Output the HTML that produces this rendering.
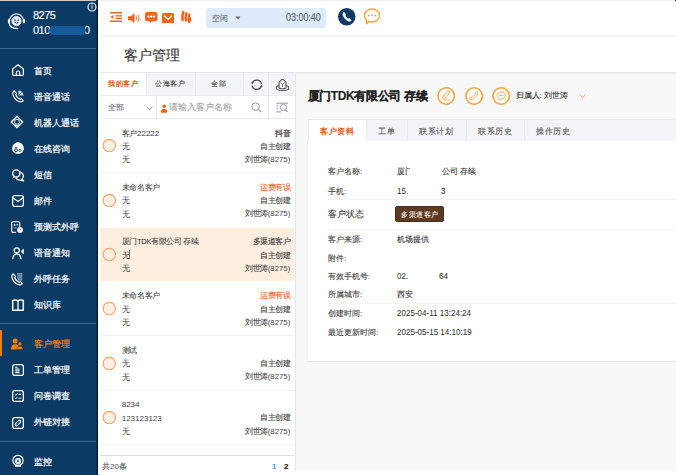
<!DOCTYPE html>
<html><head><meta charset="utf-8">
<style>
*{margin:0;padding:0;box-sizing:border-box}
html,body{width:676px;height:475px;overflow:hidden;background:#fff;font-family:"Liberation Sans",sans-serif;color:#333}
.a{position:absolute;white-space:nowrap}
#sb{position:absolute;left:0;top:0;width:98px;height:475px;background:#0b3a64}
#sb .edge{position:absolute;left:96px;top:0;width:2px;height:475px;background:linear-gradient(90deg,#08305a 0,#08305a 50%,#041831 50%)}
.sep{position:absolute;left:0;width:96px;height:1px;background:#3a6791}
.mi{position:absolute;left:33.5px;font-size:9.2px;line-height:10px;color:#fff}
.ic{position:absolute;left:11px;width:13px;height:13px}
.t9{font-size:7.2px;line-height:8px}
.line{position:absolute;background:#e9ebef}
body div.a{-webkit-text-stroke-width:0.12px}
.mi{-webkit-text-stroke-width:0.22px}
</style></head><body>

<!-- top line -->
<div class="a" style="left:0;top:0;width:676px;height:1px;background:#eceef0"></div>

<!-- SIDEBAR -->
<div id="sb">
  <div class="a" style="left:0;top:0;width:98px;height:1px;background:#c9ced6"></div>
  <div class="edge"></div>
  <!-- avatar -->
  <svg class="a" style="left:4px;top:10px" width="26" height="22" viewBox="0 0 26 22">
    <path d="M5.6 10.8 A6.9 6.9 0 0 1 19.4 10.8" fill="none" stroke="#d4e0ec" stroke-width="1.3"/>
    <circle cx="12.5" cy="11.1" r="4.6" fill="#e4edf6" stroke="#fff" stroke-width="0.9"/>
    <circle cx="10.9" cy="10.1" r="0.8" fill="#0b3a64"/><circle cx="14.1" cy="10.1" r="0.8" fill="#0b3a64"/>
    <path d="M10.5 12.2 Q12.5 14.3 14.5 12.2" fill="none" stroke="#0b3a64" stroke-width="0.9"/>
    <rect x="3.9" y="9" width="2.2" height="4.4" rx="1.1" fill="#fff"/>
    <rect x="18.9" y="9" width="2.2" height="4.4" rx="1.1" fill="#fff"/>
    <path d="M5.2 13.2 C5.6 16.6 8.6 18.6 13.6 18.6" fill="none" stroke="#dde7f1" stroke-width="1.5" stroke-linecap="round"/>
  </svg>
  <div class="a" style="left:33px;top:9px;font-size:11px;line-height:12px;color:#fff;letter-spacing:-0.5px;-webkit-text-stroke-width:0.15px">8275</div>
  <div class="a" style="left:33px;top:24px;font-size:11px;line-height:12px;color:#fff;letter-spacing:-0.5px;-webkit-text-stroke-width:0.15px">010</div>
  <div class="a" style="left:84px;top:24px;width:8px;height:12px;overflow:hidden;font-size:11px;line-height:12px;color:#fff"><span style="margin-left:0px">0</span></div>
  <div class="a" style="left:49px;top:25.8px;width:37px;height:9.5px;border-radius:5px/4.7px;background:#165a9c"></div>
  <svg class="a" style="left:87px;top:2px" width="10" height="10" viewBox="0 0 10 10">
    <circle cx="5" cy="5" r="4" fill="none" stroke="#fff" stroke-width="1.1"/>
    <rect x="4.5" y="3.8" width="1" height="3" fill="#fff"/><rect x="4.5" y="2.4" width="1" height="0.9" fill="#fff"/>
  </svg>
  <div class="sep" style="top:48px"></div>

  <!-- menu -->
  <div class="mi" style="top:65.5px">首页</div>
  <div class="mi" style="top:91.6px">语音通话</div>
  <div class="mi" style="top:117.7px">机器人通话</div>
  <div class="mi" style="top:143.8px">在线咨询</div>
  <div class="mi" style="top:169.9px">短信</div>
  <div class="mi" style="top:196px">邮件</div>
  <div class="mi" style="top:222.1px">预测式外呼</div>
  <div class="mi" style="top:248.2px">语音通知</div>
  <div class="mi" style="top:274.3px">外呼任务</div>
  <div class="mi" style="top:300.4px">知识库</div>
  <div class="sep" style="top:323px"></div>
  <div class="a" style="left:0;top:330px;width:2px;height:26px;background:#f27f0c"></div>
  <div class="mi" style="top:339px;color:#f27f0c">客户管理</div>
  <div class="mi" style="top:365.1px">工单管理</div>
  <div class="mi" style="top:391.2px">问卷调查</div>
  <div class="mi" style="top:417.3px">外链对接</div>
  <div class="sep" style="top:440.5px"></div>
  <div class="mi" style="top:456.5px">监控</div>

  <!-- icons -->
  <svg class="a" style="left:10.8px;top:63.4px" width="14" height="14" viewBox="0 0 14 14"><path d="M7 1.8 L12.35 5.9 V11.4 Q12.35 12.35 11.4 12.35 H2.6 Q1.65 12.35 1.65 11.4 V5.9 Z" fill="none" stroke="#fff" stroke-width="1.3" stroke-linejoin="round"/><path d="M5.3 12.3 V9.7 A1.7 1.7 0 0 1 8.7 9.7 V12.3" fill="none" stroke="#fff" stroke-width="1.1"/></svg>
  <svg class="a" style="left:10.8px;top:89.4px" width="14" height="14" viewBox="0 0 14 14"><path d="M3.3 1.9 C1.6 2.6 1.3 4.8 2.7 7.6 C4.1 10.3 6.7 12.5 9.5 12.8 C10.7 12.9 11.7 12.4 12.3 11.6 L10.4 9.7 L9.2 10.3 C7.8 9.8 5.3 7.3 4.7 5.7 L5.5 4.5 Z" fill="none" stroke="#fff" stroke-width="1.2" stroke-linejoin="round"/><path d="M7.4 6.6 L7.4 1.6 A5 5 0 0 1 12.6 6.6 Z" fill="#fff" opacity="0.8"/><path d="M7.4 6.6 L11 3" stroke="#0b3a64" stroke-width="0.6"/></svg>
  <svg class="a" style="left:10.3px;top:115.4px" width="14" height="14" viewBox="0 0 14 14"><path d="M7 1.3 L12.7 7 L7 12.7 L1.3 7 Z" fill="none" stroke="#fff" stroke-width="1.3" stroke-linejoin="round"/><circle cx="7" cy="6.8" r="2.5" fill="none" stroke="#fff" stroke-width="0.9"/><path d="M5 9.5 L7 11 L9 9.5" fill="none" stroke="#fff" stroke-width="0.9"/></svg>
  <svg class="a" style="left:10.6px;top:141.4px" width="14" height="14" viewBox="0 0 14 14"><path d="M7 1.2 C9.8 1.2 12.8 3.6 12.8 7.4 C12.8 10.6 10.4 12.8 7 12.8 C3.6 12.8 1.2 10.6 1.2 7.4 C1.2 3.6 4.2 1.2 7 1.2 Z" fill="#fff"/><circle cx="5" cy="9.3" r="1.5" fill="none" stroke="#0b3a64" stroke-width="1"/><circle cx="8.9" cy="9.4" r="1.1" fill="none" stroke="#0b3a64" stroke-width="0.8"/><path d="M3.4 7.2 Q4.6 5.8 6.4 7" fill="none" stroke="#0b3a64" stroke-width="0.8"/></svg>
  <svg class="a" style="left:10.8px;top:167.5px" width="14" height="14" viewBox="0 0 14 14"><circle cx="5.3" cy="5.4" r="3.6" fill="none" stroke="#fff" stroke-width="1.3"/><path d="M2.6 8 L1.6 10.4 L4 9.2" fill="#fff"/><path d="M8.7 3.8 C10.9 4.3 12.3 6.1 12.3 8.2 C12.3 9.5 11.7 10.6 10.8 11.3 L12.6 12.8 L8.8 12.2 C7 12.2 5.5 11.2 4.8 9.8" fill="none" stroke="#fff" stroke-width="1.3" stroke-linejoin="round"/></svg>
  <svg class="a" style="left:10.6px;top:193.9px" width="14" height="14" viewBox="0 0 14 14"><rect x="1.65" y="1.65" width="10.7" height="10.7" rx="2" fill="none" stroke="#fff" stroke-width="1.3"/><path d="M1.9 3.7 L7 7.6 L12.1 3.7" fill="none" stroke="#fff" stroke-width="1.2"/></svg>
  <svg class="a" style="left:10.1px;top:219.9px" width="14" height="14" viewBox="0 0 14 14"><path d="M9.8 7 V3.6 Q9.8 1.65 7.8 1.65 H3.6 Q1.65 1.65 1.65 3.6 V10.4 Q1.65 12.35 3.6 12.35 H6" fill="none" stroke="#fff" stroke-width="1.2" opacity="0.9"/><circle cx="4.6" cy="4.8" r="0.9" fill="#fff"/><path d="M6.4 4.8 H8.2" stroke="#fff" stroke-width="1"/><path d="M3.8 8 H6.5" stroke="#fff" stroke-width="0.8" opacity="0.7"/><circle cx="10" cy="10.1" r="3" fill="#efe6ea"/><circle cx="10.6" cy="9.6" r="0.6" fill="#b8b0b8"/></svg>
  <svg class="a" style="left:10.6px;top:246.1px" width="14" height="14" viewBox="0 0 14 14"><circle cx="5.8" cy="4.4" r="2.6" fill="none" stroke="#fff" stroke-width="1.3"/><path d="M1.7 12.6 C2.2 9.4 3.8 7.8 5.8 7.8 C7.8 7.8 9.4 9.4 9.9 12.6" fill="none" stroke="#fff" stroke-width="1.3" stroke-linecap="round"/><path d="M10.3 4.6 L12.8 2.6 V8.6 L10.3 6.6 Z" fill="#fff" opacity="0.9"/></svg>
  <svg class="a" style="left:10.3px;top:272.3px" width="14" height="14" viewBox="0 0 14 14"><path d="M3.3 1.9 C1.6 2.6 1.3 4.8 2.7 7.6 C4.1 10.3 6.7 12.5 9.5 12.8 C10.7 12.9 11.7 12.4 12.3 11.6 L10.4 9.7 L9.2 10.3 C7.8 9.8 5.3 7.3 4.7 5.7 L5.5 4.5 Z" fill="none" stroke="#fff" stroke-width="1.2" stroke-linejoin="round"/><path d="M7.2 1.9 H12.4 M7.2 3.9 H12.4 M7.2 5.9 H12.4 M8 7.9 H12.4" stroke="#fff" stroke-width="0.9" opacity="0.85"/></svg>
  <svg class="a" style="left:10.8px;top:298.1px" width="14" height="14" viewBox="0 0 14 14"><path d="M1.7 2.5 Q4.5 1.2 7 2.8 Q9.5 1.2 12.3 2.5 V12.2 H1.7 Z" fill="none" stroke="#fff" stroke-width="1.5" stroke-linejoin="round"/><path d="M7 2.9 V12" stroke="#fff" stroke-width="1.3"/></svg>
  <svg class="a" style="left:10.1px;top:337.1px" width="14" height="14" viewBox="0 0 14 14"><circle cx="5.1" cy="3.9" r="2.5" fill="#f27f0c"/><path d="M1 12.4 C1 8.7 2.6 7.3 5.1 7.3 C6.6 7.3 7.7 7.8 8.3 8.6 L7.3 12.4 Z" fill="#f27f0c"/><circle cx="9.9" cy="6.9" r="1.9" fill="#f27f0c" stroke="#0b3a64" stroke-width="0.5"/><path d="M6.9 12.6 C6.9 10.3 8.1 9.2 9.9 9.2 C11.7 9.2 12.9 10.3 12.9 12.6 Z" fill="#f27f0c" stroke="#0b3a64" stroke-width="0.5"/></svg>
  <svg class="a" style="left:10.6px;top:362.9px" width="14" height="14" viewBox="0 0 14 14"><rect x="1.65" y="1.65" width="10.7" height="10.7" rx="2.2" fill="none" stroke="#fff" stroke-width="1.3"/><path d="M4.2 4.4 H6.4 M4.2 6.2 H8.6 M4.2 7.9 H8.6 M4.2 9.6 H8.6" stroke="#fff" stroke-width="1.2" opacity="0.9"/></svg>
  <svg class="a" style="left:10.6px;top:389.3px" width="14" height="14" viewBox="0 0 14 14"><rect x="1.65" y="1.65" width="10.7" height="10.7" rx="2.2" fill="none" stroke="#fff" stroke-width="1.3"/><path d="M3.8 5.4 L4.8 6.2 L6.3 4.3 M3.8 9 L4.8 9.8 L6.3 7.9" fill="none" stroke="#fff" stroke-width="1"/><path d="M7.6 5.4 H10.2 M7.6 9.2 H10.2" stroke="#fff" stroke-width="1.1"/></svg>
  <svg class="a" style="left:10.6px;top:415.6px" width="14" height="14" viewBox="0 0 14 14"><rect x="1.65" y="1.65" width="10.7" height="10.7" rx="2.2" fill="none" stroke="#fff" stroke-width="1.3"/><rect x="3.6" y="5.6" width="6.8" height="2.8" rx="1.4" transform="rotate(-45 7 7)" fill="none" stroke="#fff" stroke-width="1"/><circle cx="6" cy="8" r="0.5" fill="#fff"/><circle cx="8" cy="6" r="0.5" fill="#fff"/></svg>
  <svg class="a" style="left:10.6px;top:453.6px" width="14" height="14" viewBox="0 0 14 14"><circle cx="7" cy="6.4" r="5.1" fill="none" stroke="#fff" stroke-width="1.2"/><circle cx="7" cy="7" r="3.1" fill="#fff" opacity="0.9"/><circle cx="7" cy="7" r="0.9" fill="#0b3a64"/><path d="M3.8 12.7 H10.2 L9.3 10.8 H4.7 Z" fill="#fff"/></svg>
</div>

<!-- HEADER -->
<div class="a" style="left:100px;top:35px;width:576px;height:1px;background:#f6f6f7"></div><div class="a" style="left:100px;top:36px;width:576px;height:1px;background:#f3f3f4"></div>
<svg class="a" style="left:110px;top:12px" width="12" height="10" viewBox="0 0 12 10"><rect x="0" y="0" width="12" height="1.5" fill="#f0641e"/><rect x="5.5" y="3.2" width="6.5" height="1.3" fill="#f0641e"/><rect x="5.5" y="5.7" width="6.5" height="1.3" fill="#f0641e"/><rect x="0" y="8.5" width="12" height="1.5" fill="#f0641e"/><path d="M0.3 5 L3.5 3 V7 Z" fill="#f0641e"/></svg>
<svg class="a" style="left:128px;top:12.5px" width="12" height="10.5" viewBox="0 0 12 10.5"><path d="M0 3.3 H2.8 L6.5 0.3 V10.2 L2.8 7.2 H0 Z" fill="#f0641e"/><path d="M8 3.2 C8.9 4.3 8.9 6.2 8 7.3 M9.8 1.8 C11.4 3.6 11.4 6.9 9.8 8.7" fill="none" stroke="#f0641e" stroke-width="1"/></svg>
<svg class="a" style="left:145px;top:12px" width="12.5" height="11" viewBox="0 0 12.5 11"><path d="M2.3 0 H10.2 A2.3 2.3 0 0 1 12.5 2.3 V6.9 A2.3 2.3 0 0 1 10.2 9.2 H7 L5.5 10.8 L4.2 9.2 H2.3 A2.3 2.3 0 0 1 0 6.9 V2.3 A2.3 2.3 0 0 1 2.3 0 Z" fill="#f0641e"/><circle cx="3.5" cy="4.6" r="1.15" fill="#fff"/><circle cx="6.25" cy="4.6" r="1.15" fill="#fff"/><circle cx="9" cy="4.6" r="1.15" fill="#fff"/></svg>
<svg class="a" style="left:162.3px;top:12.7px" width="12.2" height="10.5" viewBox="0 0 12.2 10.5"><rect x="0" y="0" width="12.2" height="10.5" rx="1.8" fill="#f0641e"/><path d="M2 2.5 L6.1 6.3 L10.2 2.5" fill="none" stroke="#fff" stroke-width="1.3"/></svg>
<svg class="a" style="left:180px;top:10px" width="13" height="14" viewBox="0 0 13 14"><path d="M3.2 2 C2.6 4 2 6.5 2.6 10" fill="none" stroke="#f0641e" stroke-width="2.6" stroke-linecap="round"/><path d="M6.2 3.2 C5.8 5 5.4 7.5 5.9 10.4" fill="none" stroke="#f0641e" stroke-width="2.4" stroke-linecap="round"/><path d="M9.1 4.6 C8.9 6.5 8.8 9 9.1 11.8" fill="none" stroke="#f0641e" stroke-width="2.6" stroke-linecap="round"/><ellipse cx="9.4" cy="9.4" rx="2" ry="2.6" fill="#f0641e"/></svg>

<div class="a" style="left:205.6px;top:7.6px;width:120.4px;height:20.5px;background:#ddebfa;border-radius:3px"></div>
<div class="a" style="left:212px;top:14px;font-size:8.4px;line-height:9px;color:#707070">空闲</div>
<svg class="a" style="left:235px;top:16px" width="6" height="4" viewBox="0 0 6 4"><path d="M0.5 0.5 H5.5 L3 3.5 Z" fill="#666"/></svg>
<div class="a" style="left:285.5px;top:13.2px;font-size:10.4px;line-height:10px;color:#505a66;-webkit-text-stroke-width:0.1px;transform:scaleX(0.86);transform-origin:0 0">03:00:40</div>

<svg class="a" style="left:338px;top:8.4px" width="17.5" height="17.5" viewBox="0 0 17.5 17.5"><circle cx="8.75" cy="8.75" r="8.75" fill="#0e3a68"/><path d="M6 4.3 C4.9 4.8 4.6 6.5 5.6 8.6 C6.9 11 9 12.8 11 13.2 C12.1 13.4 12.8 12.8 13.1 12.2 L11.3 10.6 L10.2 11 C9.1 10.4 7.6 8.9 7.2 7.8 L7.7 6.6 Z" fill="#fff" stroke="#fff" stroke-width="0.7" stroke-linejoin="round"/></svg>
<svg class="a" style="left:362.5px;top:8px" width="18" height="17" viewBox="0 0 18 17"><path d="M9 1 C13.2 1 16.5 3.8 16.5 7.5 C16.5 11.2 13.2 14 9 14 C8 14 7 13.8 6.2 13.5 L3.5 15.8 L3.8 12.5 C2.3 11.3 1.5 9.5 1.5 7.5 C1.5 3.8 4.8 1 9 1 Z" fill="none" stroke="#f7a035" stroke-width="1.3" stroke-linejoin="round"/><circle cx="5.8" cy="7.5" r="0.9" fill="#f7a035"/><circle cx="9" cy="7.5" r="0.9" fill="#f7a035"/><circle cx="12.2" cy="7.5" r="0.9" fill="#f7a035"/></svg>

<!-- TITLE -->
<div class="a" style="left:123.5px;top:48px;font-size:14px;line-height:14px;color:#333">客户管理</div>
<div class="a" style="left:100px;top:72px;width:576px;height:1px;background:#e5e6e8"></div><div class="a" style="left:100px;top:73px;width:576px;height:1px;background:#ededee"></div>

<!-- RIGHT GRAY -->
<div class="a" style="left:295px;top:74px;width:381px;height:397px;background:#f8f8f8"></div><div class="a" style="left:295px;top:471px;width:381px;height:1px;background:#fbfbfb"></div>
<div class="a" style="left:295px;top:73px;width:1px;height:398px;background:#e6e8ec"></div>


<!-- LEFT LIST -->
<div class="a" style="left:100px;top:73px;width:195px;height:22px;background:#f4f5f8"></div>
<div class="a" style="left:100px;top:73px;width:46.4px;height:22px;background:#fff"></div>
<div class="line" style="left:146.4px;top:73px;width:1px;height:22px"></div>
<div class="line" style="left:194.5px;top:73px;width:1px;height:22px"></div>
<div class="line" style="left:243px;top:73px;width:1px;height:22px"></div>
<div class="line" style="left:268px;top:73px;width:1px;height:45px"></div>
<div class="line" style="left:100px;top:95px;width:195px;height:1px"></div>
<div class="line" style="left:156px;top:95px;width:1px;height:23px"></div>
<div class="line" style="left:100px;top:118px;width:195px;height:1px"></div>
<div class="a t9" style="left:107.8px;top:80.3px;color:#ef5c18;-webkit-text-stroke-width:0.3px;font-size:7.6px;transform:scale(0.94);transform-origin:0 0">我的客户</div>
<div class="a t9" style="left:155px;top:80.3px;color:#444;font-size:7.6px;transform:scale(0.94);transform-origin:0 0">公海客户</div>
<div class="a t9" style="left:211px;top:80.3px;color:#444;font-size:7.6px;transform:scale(0.94);transform-origin:0 0">全部</div>
<svg class="a" style="left:249.5px;top:78px" width="14" height="14" viewBox="0 0 14 14"><path d="M2.3 5.3 A4.8 4.8 0 0 1 11.5 5.9" fill="none" stroke="#4a4a4a" stroke-width="1.3"/><path d="M11.3 8.3 A4.8 4.8 0 0 1 2.1 7.6" fill="none" stroke="#4a4a4a" stroke-width="1.3"/><path d="M1 4.6 L3.6 4.6 L2.3 6.6 Z" fill="#4a4a4a"/><path d="M12.8 9 L10.2 9 L11.5 7 Z" fill="#4a4a4a"/></svg>
<svg class="a" style="left:275px;top:78px" width="15" height="14" viewBox="0 0 15 14"><ellipse cx="7.5" cy="9.9" rx="6.4" ry="2.6" fill="none" stroke="#555" stroke-width="1.1"/><path d="M4 9.9 V5.4 Q4 4.2 5 3.2 L6.4 1.8 Q7.5 0.9 8.6 1.8 L10 3.2 Q11 4.2 11 5.4 V9.9 Q7.5 11.5 4 9.9 Z" fill="#fbfbfc" stroke="#555" stroke-width="1.1"/><path d="M5.4 4.6 L7.5 6.2 L9.6 4.6 M7.5 6.2 V9" fill="none" stroke="#666" stroke-width="0.9"/></svg>
<div class="a" style="left:108px;top:103.3px;font-size:8.4px;line-height:9px;color:#7a7a7a">全部</div>
<svg class="a" style="left:146px;top:106px" width="7" height="4.5" viewBox="0 0 7 4.5"><path d="M0.5 0.5 L3.5 3.8 L6.5 0.5" fill="none" stroke="#999" stroke-width="0.9"/></svg>
<svg class="a" style="left:160.6px;top:103.5px" width="6.5" height="9" viewBox="0 0 6.5 9"><circle cx="3.25" cy="2.2" r="1.8" fill="#f0641e"/><path d="M0 8.8 V7.2 C0 5.6 1.3 5 3.25 5 C5.2 5 6.5 5.6 6.5 7.2 V8.8 Z" fill="#f0641e"/></svg>
<div class="a" style="left:169px;top:102.8px;font-size:8.9px;line-height:9.5px;color:#a5a5a5">请输入客户名称</div>
<svg class="a" style="left:250.5px;top:102.2px" width="11" height="10.5" viewBox="0 0 11 10.5"><circle cx="4.6" cy="4.6" r="3.8" fill="none" stroke="#8f96a3" stroke-width="1"/><path d="M7.3 7.3 L10.3 10" stroke="#8f96a3" stroke-width="1.1"/></svg>
<svg class="a" style="left:276px;top:101.5px" width="13" height="11.5" viewBox="0 0 13 11.5"><path d="M0.3 1.2 H12 M0.3 4 H2.3 M0.3 6.9 H2.3 M0.3 9.9 H5" stroke="#8f96a3" stroke-width="1"/><circle cx="7.4" cy="5.5" r="3.1" fill="none" stroke="#8f96a3" stroke-width="1"/><path d="M9.6 7.8 L11.6 9.9" stroke="#8f96a3" stroke-width="1.1"/></svg>
<div class="a" style="left:294.8px;top:73px;width:1px;height:398px;background:#e4e6ea"></div>

<!-- ITEMS -->
<svg class="a" style="left:102px;top:138.3px" width="15" height="15" viewBox="0 0 15 15"><circle cx="7.3" cy="7.5" r="6.2" fill="#fdeee3" stroke="#f2a266" stroke-width="1.15"/></svg>
<div class="a" style="left:121.7px;top:129.5px;font-size:7.6px;line-height:8px;color:#3a3a3a;letter-spacing:-0.35px;-webkit-text-stroke-width:0.06px">客户<span style="font-size:8.0px;-webkit-text-stroke-width:0;letter-spacing:0">22222</span></div>
<div class="a" style="left:121.7px;top:143.1px;font-size:7.6px;line-height:8px;color:#444;letter-spacing:-0.35px;-webkit-text-stroke-width:0.03px">无</div>
<div class="a" style="left:121.7px;top:156.3px;font-size:7.6px;line-height:8px;color:#444;letter-spacing:0px;-webkit-text-stroke-width:0.03px">无</div>
<div class="a" style="right:385.9px;top:129.5px;font-size:7.6px;line-height:8px;color:#333;letter-spacing:-0.55px;-webkit-text-stroke-width:0.22px">抖音</div>
<div class="a" style="right:385.9px;top:142.9px;font-size:7.6px;line-height:8px;color:#444;letter-spacing:-0.55px;">自主创建</div>
<div class="a" style="right:385.7px;top:156.1px;font-size:7.6px;line-height:8px;color:#444;letter-spacing:-0.4px;">刘世涛<span style="font-size:7.8px;-webkit-text-stroke-width:0;letter-spacing:0">(8275)</span></div>
<div class="line" style="left:100px;top:172.3px;width:195px;height:1px;background:#f0f1f4"></div>
<svg class="a" style="left:102px;top:192.6px" width="15" height="15" viewBox="0 0 15 15"><circle cx="7.3" cy="7.5" r="6.2" fill="#fdeee3" stroke="#f2a266" stroke-width="1.15"/></svg>
<div class="a" style="left:121.7px;top:183.8px;font-size:7.6px;line-height:8px;color:#3a3a3a;letter-spacing:-0.35px;-webkit-text-stroke-width:0.06px">未命名客户</div>
<div class="a" style="left:121.7px;top:197.4px;font-size:7.6px;line-height:8px;color:#444;letter-spacing:-0.35px;-webkit-text-stroke-width:0.03px">无</div>
<div class="a" style="left:121.7px;top:210.6px;font-size:7.6px;line-height:8px;color:#444;letter-spacing:0px;-webkit-text-stroke-width:0.03px">无</div>
<div class="a" style="right:385.9px;top:183.8px;font-size:7.6px;line-height:8px;color:#f0641e;letter-spacing:-0.55px;">运费有误</div>
<div class="a" style="right:385.9px;top:197.2px;font-size:7.6px;line-height:8px;color:#444;letter-spacing:-0.55px;">自主创建</div>
<div class="a" style="right:385.7px;top:210.4px;font-size:7.6px;line-height:8px;color:#444;letter-spacing:-0.4px;">刘世涛<span style="font-size:7.8px;-webkit-text-stroke-width:0;letter-spacing:0">(8275)</span></div>
<div class="a" style="left:100px;top:227.5px;width:195px;height:53.7px;background:#fdeee0"></div>
<svg class="a" style="left:102px;top:246.9px" width="15" height="15" viewBox="0 0 15 15"><circle cx="7.3" cy="7.5" r="6.2" fill="none" stroke="#f2a266" stroke-width="1.15"/></svg>
<div class="a" style="left:121.7px;top:238.1px;font-size:7.6px;line-height:8px;color:#3a3a3a;letter-spacing:-0.35px;-webkit-text-stroke-width:0.06px">厦门TDK有限公司 存续</div>
<div class="a" style="left:121.7px;top:251.7px;font-size:7.6px;line-height:8px;color:#444;letter-spacing:-0.35px;-webkit-text-stroke-width:0.03px">无</div>
<div class="a" style="left:121.7px;top:264.9px;font-size:7.6px;line-height:8px;color:#444;letter-spacing:0px;-webkit-text-stroke-width:0.03px">无</div>
<div class="a" style="right:385.9px;top:238.1px;font-size:7.6px;line-height:8px;color:#333;letter-spacing:-0.55px;">多渠道客户</div>
<div class="a" style="right:385.9px;top:251.5px;font-size:7.6px;line-height:8px;color:#444;letter-spacing:-0.55px;">自主创建</div>
<div class="a" style="right:385.7px;top:264.7px;font-size:7.6px;line-height:8px;color:#444;letter-spacing:-0.4px;">刘世涛<span style="font-size:7.8px;-webkit-text-stroke-width:0;letter-spacing:0">(8275)</span></div>
<svg class="a" style="left:102px;top:301.2px" width="15" height="15" viewBox="0 0 15 15"><circle cx="7.3" cy="7.5" r="6.2" fill="#fdeee3" stroke="#f2a266" stroke-width="1.15"/></svg>
<div class="a" style="left:121.7px;top:292.4px;font-size:7.6px;line-height:8px;color:#3a3a3a;letter-spacing:-0.35px;-webkit-text-stroke-width:0.06px">未命名客户</div>
<div class="a" style="left:121.7px;top:306.0px;font-size:7.6px;line-height:8px;color:#444;letter-spacing:-0.35px;-webkit-text-stroke-width:0.03px">无</div>
<div class="a" style="left:121.7px;top:319.2px;font-size:7.6px;line-height:8px;color:#444;letter-spacing:0px;-webkit-text-stroke-width:0.03px">无</div>
<div class="a" style="right:385.9px;top:292.4px;font-size:7.6px;line-height:8px;color:#f0641e;letter-spacing:-0.55px;">运费有误</div>
<div class="a" style="right:385.9px;top:305.8px;font-size:7.6px;line-height:8px;color:#444;letter-spacing:-0.55px;">自主创建</div>
<div class="a" style="right:385.7px;top:319.0px;font-size:7.6px;line-height:8px;color:#444;letter-spacing:-0.4px;">刘世涛<span style="font-size:7.8px;-webkit-text-stroke-width:0;letter-spacing:0">(8275)</span></div>
<div class="line" style="left:100px;top:335.2px;width:195px;height:1px;background:#f0f1f4"></div>
<svg class="a" style="left:102px;top:355.5px" width="15" height="15" viewBox="0 0 15 15"><circle cx="7.3" cy="7.5" r="6.2" fill="#fdeee3" stroke="#f2a266" stroke-width="1.15"/></svg>
<div class="a" style="left:121.7px;top:346.7px;font-size:7.6px;line-height:8px;color:#3a3a3a;letter-spacing:-0.35px;-webkit-text-stroke-width:0.06px">测试</div>
<div class="a" style="left:121.7px;top:360.3px;font-size:7.6px;line-height:8px;color:#444;letter-spacing:-0.35px;-webkit-text-stroke-width:0.03px">无</div>
<div class="a" style="left:121.7px;top:373.5px;font-size:7.6px;line-height:8px;color:#444;letter-spacing:0px;-webkit-text-stroke-width:0.03px">无</div>
<div class="a" style="right:385.9px;top:360.1px;font-size:7.6px;line-height:8px;color:#444;letter-spacing:-0.55px;">自主创建</div>
<div class="a" style="right:385.7px;top:373.3px;font-size:7.6px;line-height:8px;color:#444;letter-spacing:-0.4px;">刘世涛<span style="font-size:7.8px;-webkit-text-stroke-width:0;letter-spacing:0">(8275)</span></div>
<div class="line" style="left:100px;top:389.5px;width:195px;height:1px;background:#f0f1f4"></div>
<svg class="a" style="left:102px;top:409.8px" width="15" height="15" viewBox="0 0 15 15"><circle cx="7.3" cy="7.5" r="6.2" fill="#fdeee3" stroke="#f2a266" stroke-width="1.15"/></svg>
<div class="a" style="left:121.7px;top:401.0px;font-size:7.6px;line-height:8px;color:#3a3a3a;letter-spacing:-0.35px;-webkit-text-stroke-width:0.06px"><span style="font-size:8.0px;-webkit-text-stroke-width:0;letter-spacing:0">8234</span></div>
<div class="a" style="left:121.7px;top:414.6px;font-size:7.6px;line-height:8px;color:#444;letter-spacing:-0.35px;-webkit-text-stroke-width:0.03px"><span style="font-size:8.0px;-webkit-text-stroke-width:0;letter-spacing:0">123123123</span></div>
<div class="a" style="left:121.7px;top:427.8px;font-size:7.6px;line-height:8px;color:#444;letter-spacing:0px;-webkit-text-stroke-width:0.03px">无</div>
<div class="a" style="right:385.9px;top:414.4px;font-size:7.6px;line-height:8px;color:#444;letter-spacing:-0.55px;">自主创建</div>
<div class="a" style="right:385.7px;top:427.6px;font-size:7.6px;line-height:8px;color:#444;letter-spacing:-0.4px;">刘世涛<span style="font-size:7.8px;-webkit-text-stroke-width:0;letter-spacing:0">(8275)</span></div>
<div class="line" style="left:100px;top:443.8px;width:195px;height:1px;background:#f0f1f4"></div>

<div class="line" style="left:100px;top:455px;width:194px;height:1px;background:#dcdde0"></div>
<div class="a" style="left:102px;top:463px;font-size:7.6px;line-height:8px;color:#555">共<span style="font-size:8px;-webkit-text-stroke-width:0">20</span>条</div>
<div class="a" style="left:272px;top:462.5px;font-size:8px;line-height:8px;color:#1a7ee8">1</div>
<div class="a" style="left:284px;top:462.5px;font-size:8px;line-height:8px;color:#111;font-weight:bold">2</div>
<div class="a" style="left:98px;top:472px;width:578px;height:3px;background:#fff"></div>

<!-- RIGHT DETAIL -->
<div class="a" style="left:307.5px;top:89.5px;font-size:12px;line-height:13px;color:#222;font-weight:bold;letter-spacing:-0.35px">厦门TDK有限公司 存续</div>
<svg class="a" style="left:437px;top:87px" width="18.3" height="18" viewBox="0 0 18 18"><circle cx="9" cy="9" r="8.2" fill="#fff" stroke="#f7a035" stroke-width="1.5"/><rect x="4.2" y="6.6" width="9.6" height="2.7" rx="1.35" transform="rotate(-48 9 7.95)" fill="none" stroke="#f6ae5e" stroke-width="0.95"/><path d="M6.4 13 H12.4" stroke="#f6ae5e" stroke-width="0.95" stroke-linecap="round"/></svg>
<svg class="a" style="left:464.5px;top:87px" width="18.3" height="18" viewBox="0 0 18 18"><circle cx="9" cy="9" r="8.2" fill="#fff" stroke="#f7a035" stroke-width="1.5"/><path d="M4.6 12.4 C4 11.6 4.3 10.7 5.2 10.4 L6.5 10.6 C8 9.8 9.6 8.2 10.4 6.7 L10.1 5.3 C10.4 4.4 11.3 4.1 12.1 4.6 C13.1 5.4 12.8 7.6 10.6 10 C8.3 12.4 5.7 13.3 4.6 12.4 Z" fill="none" stroke="#f6ae5e" stroke-width="0.95" stroke-linejoin="round"/></svg>
<svg class="a" style="left:491.8px;top:87px" width="18.3" height="18" viewBox="0 0 18 18"><circle cx="9" cy="9" r="8.2" fill="#fff" stroke="#f7a035" stroke-width="1.5"/><path d="M9 5 C11.5 5 13 6.6 13 8.5 C13 10.4 11.5 12 9 12 L7 13.3 V11.6 C5.8 11 5 9.8 5 8.5 C5 6.6 6.5 5 9 5 Z" fill="none" stroke="#f6ae5e" stroke-width="1"/><path d="M6.8 8.6 H11.2" stroke="#f6ae5e" stroke-width="1"/></svg>
<div class="a" style="left:515.5px;top:91.5px;font-size:7.6px;line-height:8px;color:#333">归属人: 刘世涛</div>
<svg class="a" style="left:579px;top:94px" width="7" height="4.5" viewBox="0 0 7 4.5"><path d="M0.5 0.5 L3.5 3.8 L6.5 0.5" fill="none" stroke="#f0a080" stroke-width="1"/></svg>

<div class="a" style="left:307.5px;top:118.5px;width:368.5px;height:22.5px;background:#f4f5f8;border-top:1px solid #e8eaee"></div>
<div class="a" style="left:307.5px;top:118.5px;width:59px;height:23px;background:#fff;border-top:1px solid #e8eaee;border-left:1px solid #e8eaee;border-right:1px solid #e8eaee"></div>
<div class="line" style="left:406.5px;top:119px;width:1px;height:22px"></div>
<div class="line" style="left:465.5px;top:119px;width:1px;height:22px"></div>
<div class="line" style="left:524.2px;top:119px;width:1px;height:22px"></div>
<div class="a" style="left:319.6px;top:126.5px;font-size:8.5px;line-height:9px;color:#ef5c18;-webkit-text-stroke-width:0.35px;transform:scale(0.965);transform-origin:0 0">客户资料</div>
<div class="a" style="left:377.8px;top:126.5px;font-size:8.5px;line-height:9px;color:#555;transform:scale(0.965);transform-origin:0 0">工单</div>
<div class="a" style="left:419.4px;top:126.5px;font-size:8.5px;line-height:9px;color:#555;transform:scale(0.965);transform-origin:0 0">联系计划</div>
<div class="a" style="left:477.6px;top:126.5px;font-size:8.5px;line-height:9px;color:#555;transform:scale(0.965);transform-origin:0 0">联系历史</div>
<div class="a" style="left:535.6px;top:126.5px;font-size:8.5px;line-height:9px;color:#555;transform:scale(0.965);transform-origin:0 0">操作历史</div>

<div class="a" style="left:307px;top:141px;width:369px;height:220.5px;background:#fff;border-left:1px solid #eceef0;border-bottom:1px solid #e6e8ec"></div>

<div class="a" style="left:328px;top:168px;font-size:7.9px;line-height:8px;color:#444;letter-spacing:0px;">客户名称:</div>
<div class="a" style="left:396.5px;top:168px;font-size:7.9px;line-height:8px;color:#333;letter-spacing:0px;">厦门</div>
<div class="a" style="left:409.5px;top:167px;width:32px;height:10px;background:#fff"></div>
<div class="a" style="left:442.3px;top:168px;font-size:7.9px;line-height:8px;color:#333;letter-spacing:0px;">公司 存续</div>
<div class="a" style="left:328px;top:187.5px;font-size:7.9px;line-height:8px;color:#444;letter-spacing:0px;">手机:</div>
<div class="a" style="left:396.8px;top:186.5px;font-size:9.2px;line-height:9px;color:#333;-webkit-text-stroke-width:0.05px;transform:scaleX(0.875);transform-origin:0 0">15.</div>
<div class="a" style="left:441px;top:186.5px;font-size:9.2px;line-height:9px;color:#333;transform:scaleX(0.875);transform-origin:0 0">3</div>
<div class="a" style="left:328px;top:236px;font-size:7.9px;line-height:8px;color:#444;letter-spacing:0px;">客户来源:</div>
<div class="a" style="left:396.5px;top:236px;font-size:7.9px;line-height:8px;color:#333;letter-spacing:0px;">机场提供</div>
<div class="a" style="left:328px;top:254.6px;font-size:7.9px;line-height:8px;color:#444;letter-spacing:0px;">附件:</div>
<div class="a" style="left:328px;top:273.2px;font-size:7.9px;line-height:8px;color:#444;letter-spacing:0px;">有效手机号:</div>
<div class="a" style="left:396.8px;top:272.2px;font-size:9.2px;line-height:9px;color:#333;-webkit-text-stroke-width:0.05px;transform:scaleX(0.875);transform-origin:0 0">02.</div>
<div class="a" style="left:439px;top:272.2px;font-size:9.2px;line-height:9px;color:#333;transform:scaleX(0.875);transform-origin:0 0">64</div>
<div class="a" style="left:328px;top:291.4px;font-size:7.9px;line-height:8px;color:#444;letter-spacing:0px;">所属城市:</div>
<div class="a" style="left:396.5px;top:291.4px;font-size:7.9px;line-height:8px;color:#333;letter-spacing:0px;">西安</div>
<div class="a" style="left:328px;top:310.4px;font-size:7.9px;line-height:8px;color:#444;letter-spacing:0px;">创建时间:</div>
<div class="a" style="left:396.8px;top:309.4px;font-size:9.2px;line-height:9px;color:#333;-webkit-text-stroke-width:0.05px;transform:scaleX(0.875);transform-origin:0 0">2025-04-11 13:24:24</div>
<div class="a" style="left:328px;top:329.4px;font-size:7.9px;line-height:8px;color:#444;letter-spacing:0px;">最近更新时间:</div>
<div class="a" style="left:396.8px;top:328.4px;font-size:9.2px;line-height:9px;color:#333;-webkit-text-stroke-width:0.05px;transform:scaleX(0.875);transform-origin:0 0">2025-05-15 14:10:19</div>

<div class="a" style="left:328px;top:209.5px;font-size:8.8px;line-height:9px;color:#444">客户状态</div>
<div class="a" style="left:395px;top:206.2px;width:49.2px;height:16.2px;background:#5e3b24;border:1px solid #4a2b16;border-radius:2px"></div>
<div class="a" style="left:401.2px;top:210.6px;font-size:7.6px;line-height:8px;color:#f0e8e4;transform:scale(0.94);transform-origin:0 0">多渠道客户</div>
<div class="a" style="left:328px;top:199px;width:348px;height:0;border-top:1px dotted #ececec"></div>
<div class="a" style="left:328px;top:228.5px;width:348px;height:0;border-top:1px dotted #ececec"></div>
<div class="a" style="left:328px;top:303px;width:348px;height:0;border-top:1px dotted #ececec"></div>

<div class="a" style="left:675px;top:0;width:1px;height:1px;background:#222"></div>
<div class="a" style="left:129px;top:249.5px;width:1px;height:9px;background:#666"></div>
</body></html>
